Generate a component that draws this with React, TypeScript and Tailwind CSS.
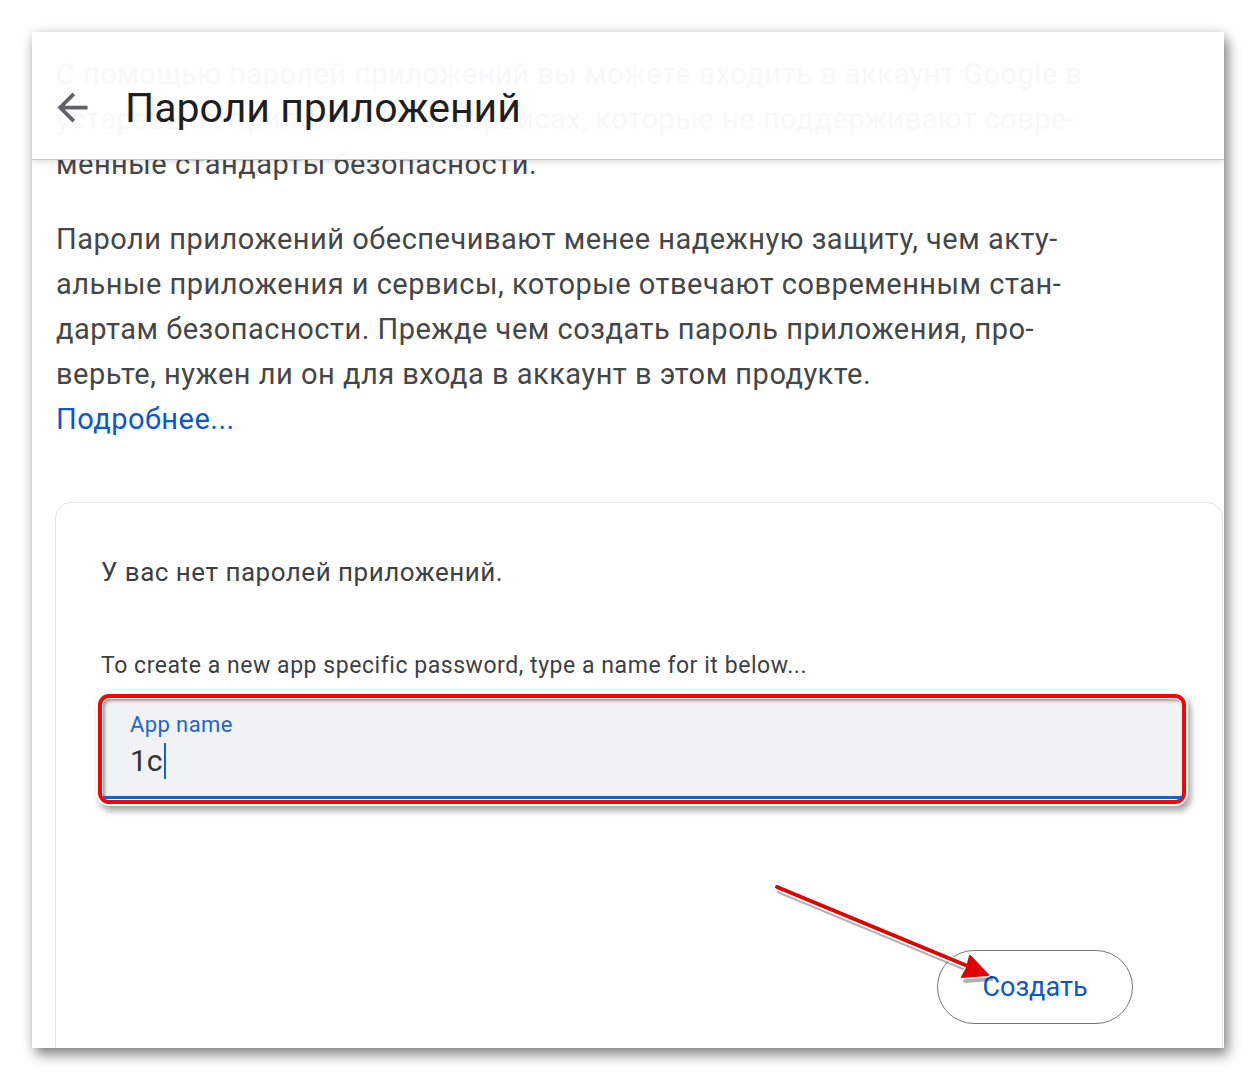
import React from "react";

const font = { fontFamily: "Roboto, 'Noto Sans', 'Liberation Sans', sans-serif" };

function BackArrow() {
  return (
    <svg width="45" height="45" viewBox="0 0 24 24" className="shrink-0">
      <path
        fill="#5f6368"
        d="M20 11H7.83l5.59-5.59L12 4l-8 8 8 8 1.41-1.41L7.83 13H20v-2z"
      />
    </svg>
  );
}

function PointerArrow() {
  // tip at (988,975), tail at (777,887)
  const line = "M777 887 L970 967";
  const head = "M988 975 L962 977 L966.5 969 L970 956 Z";
  return (
    <svg
      className="absolute left-0 top-0 pointer-events-none"
      width="1256"
      height="1080"
      viewBox="0 0 1256 1080"
    >
      <g transform="translate(3 4)" opacity="0.3">
        <path d={line} stroke="#000" strokeWidth="6" strokeLinecap="round" fill="none" />
        <path d={head} fill="#000" stroke="#000" strokeWidth="4" strokeLinejoin="round" />
      </g>
      <path d={line} stroke="#fff" strokeWidth="7" strokeLinecap="round" fill="none" />
      <path d={head} fill="#fff" stroke="#fff" strokeWidth="5" strokeLinejoin="round" />
      <path d={line} stroke="#e00000" strokeWidth="4" strokeLinecap="round" fill="none" />
      <path d={head} fill="#e00000" stroke="#e00000" strokeWidth="2" strokeLinejoin="round" />
    </svg>
  );
}

export default function App() {
  return (
    <div className="relative w-[1256px] h-[1080px] bg-white overflow-hidden" style={font}>
      <div className="ml-[32px] mt-[32px] w-[1192px] h-[1016px] relative overflow-hidden bg-white shadow-[4px_7px_12px_rgba(0,0,0,0.45),0_0_10px_rgba(0,0,0,0.12)]">
        {/* scrolled page content */}
        <div className="pl-[23px] pt-[20px] pr-[1px]">
          <p className="pl-[1px] text-[29px] leading-[45px] text-[#444746] tracking-[0.5px]">
            С помощью паролей приложений вы можете входить в аккаунт Google в
            <br />
            устаревших приложениях и сервисах, которые не поддерживают совре-
            <br />
            менные стандарты безопасности.
          </p>
          <p className="pl-[1px] mt-[30px] text-[29px] leading-[45px] text-[#444746] tracking-[0.5px]">
            Пароли приложений обеспечивают менее надежную защиту, чем акту-
            <br />
            альные приложения и сервисы, которые отвечают современным стан-
            <br />
            дартам безопасности. Прежде чем создать пароль приложения, про-
            <br />
            верьте, нужен ли он для входа в аккаунт в этом продукте.
            <br />
            <a className="text-[#0b57d0]">Подробнее...</a>
          </p>

          <div className="mt-[60px] h-[600px] rounded-[16px] border border-[#e3e3e3] pl-[45px] pr-[45px] pt-[51px]">
            <p className="text-[26px] leading-[36px] text-[#3c4043] tracking-[0.5px]">
              У вас нет паролей приложений.
            </p>
            <p className="mt-[61px] text-[23px] leading-[30px] text-[#3c4043] tracking-[0.55px]">
              To create a new app specific password, type a name for it below...
            </p>

            <div className="mt-[13px] -ml-[3px] w-[1088px] h-[110px] rounded-[11px] border-[4px] border-[#ff0000] p-[1px] shadow-[0_0_0_2px_#ffffff,3px_5px_6px_2px_rgba(0,0,0,0.35)]">
              <div className="h-full rounded-t-[6px] bg-[#f0f2f5] border-b-[3px] border-[#1a5fd0] pl-[27px] pt-[12px] shadow-[inset_2px_2px_3px_rgba(0,0,0,0.35)]">
                <div className="text-[22px] leading-[28px] text-[#1a66d2] tracking-[0.4px]">App name</div>
                <div className="mt-[4px] flex items-center text-[30px] leading-[36px] text-[#333]">
                  <span>1c</span>
                  <span className="ml-[1px] inline-block w-[2px] h-[36px] bg-[#1a5fd0]" />
                </div>
              </div>
            </div>

            <div className="mt-[146px] flex justify-end pr-[44px]">
              <button className="w-[196px] h-[74px] rounded-full border border-[#747775] text-[27px] text-[#0b57d0] flex items-center justify-center">
                Создать
              </button>
            </div>
          </div>
        </div>

        {/* sticky header laid over the scrolled content */}
        <div className="absolute left-0 top-0 w-full h-[128px] bg-white/[0.96] border-b border-[#c4c7c5] shadow-[0_2px_6px_rgba(0,0,0,0.15)] pt-[24px] flex items-center">
          <div className="ml-[18px] flex items-center">
            <BackArrow />
          </div>
          <h1 className="ml-[30px] text-[41px] leading-[52px] text-[#1f1f1f] font-normal">
            Пароли приложений
          </h1>
        </div>
      </div>

      <PointerArrow />
    </div>
  );
}
